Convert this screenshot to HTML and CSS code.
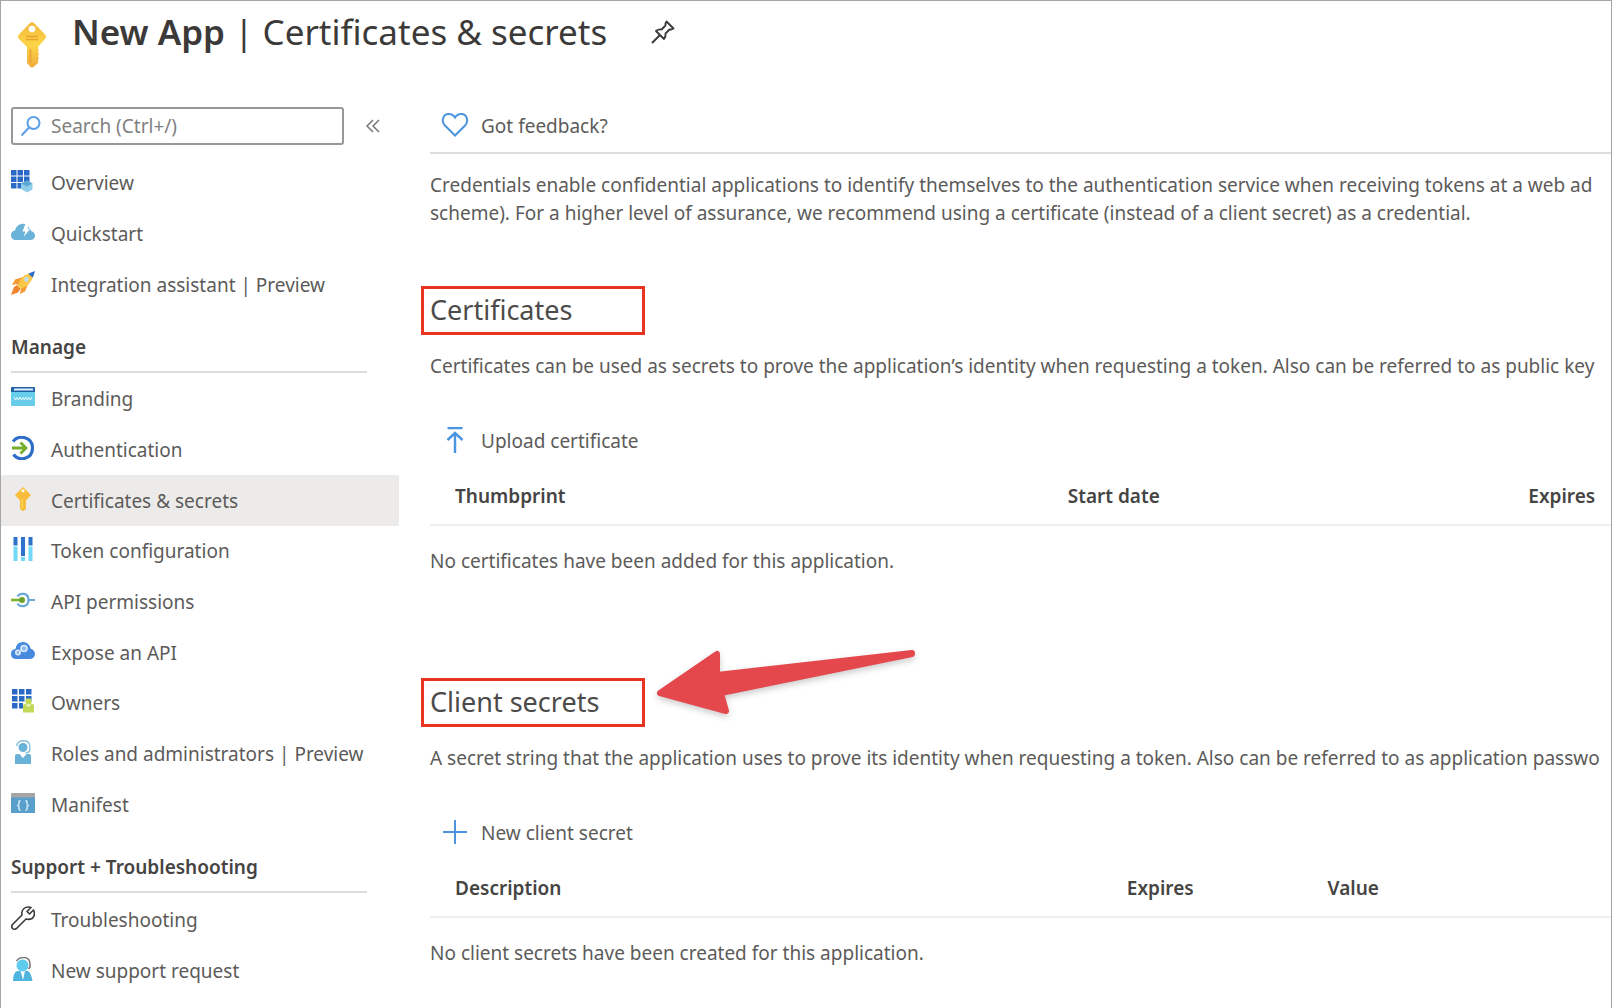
FILE: index.html
```html
<!DOCTYPE html>
<html lang="en">
<head>
    <meta charset="utf-8">
    <title>New App | Certificates &amp; secrets</title>
    <link rel="stylesheet" href="styles.css">
</head>
<body>
    <header class="header">
        <svg class="header-key" viewBox="0 0 28 46">
            <defs>
                <linearGradient id="keyFill" x1="0" y1="0" x2="0" y2="1">
                    <stop offset="0" stop-color="#f5b73c"/>
                    <stop offset="0.5" stop-color="#fcd546"/>
                    <stop offset="1" stop-color="#f0ac3c"/>
                </linearGradient>
            </defs>
            <path fill="url(#keyFill)" d="M12 1Q14-.5 16 1L27 12.500Q29 15 27 17L20 25V27L21 28L20 30L21 32L20 34L21 36L20 38V41L15 45.500H13L9 41V25L1 17Q-1 15 1 12.500Z"/>
            <circle cx="14" cy="7" r="3.300" fill="#fff"/>
            <path d="M8 14.500H20M8 17.500H20" stroke="#e5a32f" stroke-width="1.500"/>
            <path d="M12.500 27V41" stroke="#e9a035" stroke-width="1.500"/>
        </svg>
        <h1><strong>New App</strong> | Certificates &amp; secrets</h1>
        <button class="icon-button" aria-label="Pin">
            <svg width="24" height="24" viewBox="0 0 24 24" fill="none" stroke="#3b3a39" stroke-width="1.900" stroke-linejoin="round">
                <path d="M15.500 1.500L22.500 8.500L20.500 9.500L18.500 9.500L14.500 13.500Q15 16.500 13 19L5 11Q7.500 9 10.500 9.500L14.500 5.500L14.500 3.500Z"/>
                <path d="M9 15L1 23"/>
            </svg>
        </button>
    </header>

    <div class="layout">
        <aside class="sidebar">
            <div class="search-row">
                <div class="search">
                    <svg width="20" height="20" viewBox="0 0 20 20" fill="none" stroke="#5a9fe8" stroke-width="2">
                        <circle cx="12.500" cy="7" r="6"/>
                        <path d="M8 11.500L.5 19.500"/>
                    </svg>
                    <input type="text" placeholder="Search (Ctrl+/)" aria-label="Search">
                </div>
                <button class="icon-button" aria-label="Collapse menu">
                    <svg width="14" height="14" viewBox="0 0 14 14" fill="none" stroke="#767676" stroke-width="1.500">
                        <path d="M7 1L1 7L7 13M13 1L7 7L13 13"/>
                    </svg>
                </button>
            </div>

            <nav>
                <ul class="menu">
                    <li><a href="#">
                        <svg viewBox="0 0 24 24">
                            <g fill="#2a6ac6">
                                <path d="M0 1h5.500v5.500H0zM6.500 1H12v5.500H6.500zM13 1h5.500v5.500H13zM0 7.500h5.500V13H0zM6.500 7.500H12V13H6.500zM13 7.500h5.500V13H13zM0 14h5.500v5.500H0zM6.500 14H12v5.500H6.500z"/>
                            </g>
                            <path fill="#8fcde9" d="M10 14.500L16 11.500L21.500 14.500V20.500L16 23.500L10 20Z"/>
                            <path fill="#5daad4" d="M10 14.500L16 11.500L21.500 14.500L16 17.500Z"/>
                        </svg>
                        Overview
                    </a></li>
                    <li><a href="#">
                        <svg viewBox="0 0 24 24">
                            <path fill="#69b2d8" d="M5 20Q0 20 0 15Q0 11 4 10.500Q5 5 10.500 4Q15 3 17.500 7Q20 9 20 11Q24 12 24 16Q23.500 20 19 20Z"/>
                            <path fill="#fff" d="M14.500 3.500L19 3L16.500 8.500H19.500L12.500 17L14.500 11.500H11.500Z"/>
                        </svg>
                        Quickstart
                    </a></li>
                    <li><a href="#">
                        <svg viewBox="0 0 24 24">
                            <path fill="#f39a32" d="M12 6L4 8.500L1 14L6 13L10 18L9 23L14 20.500L17.500 12Z"/>
                            <path fill="#f0832d" d="M6 14L3 16L0 24L7 21.500L9.500 18Z"/>
                            <path fill="#fbc748" d="M7 15Q9 5 18 2.500L22 6Q19 15 9.500 18Z"/>
                            <path fill="#2b6fc5" d="M17.500 2.500L24 0L22 6.500Q19.500 5.500 17.500 2.500Z"/>
                            <circle cx="15.500" cy="8.500" r="2.400" fill="#bfe0ef"/>
                        </svg>
                        Integration assistant | Preview
                    </a></li>
                </ul>

                <h2>Manage</h2>
                <ul class="menu menu-manage">
                    <li><a href="#">
                        <svg viewBox="0 0 24 24">
                            <path fill="#67cdeb" d="M0 6H24V20Q24 21 23 21H1Q0 21 0 20Z"/>
                            <path fill="#1f62a8" d="M1 2H23Q24 2 24 3V7H0V3Q0 2 1 2Z"/>
                            <path stroke="#dff0fa" stroke-width="2" d="M3 4.500H22"/>
                            <path fill="none" stroke="#e8fafd" d="M3 12L4.500 15L6 12.500L7.500 15L9 12L10.500 15L12 12.500L13.500 15L15 12L16.500 15L18 12.500L19.500 15L21 12"/>
                        </svg>
                        Branding
                    </a></li>
                    <li><a href="#">
                        <svg viewBox="0 0 24 24" fill="none">
                            <path stroke="#2b6dc7" stroke-width="3.200" d="M2 5.500C8-2 21.500 1 21.500 12C21.500 23 8 26 2.500 18.500"/>
                            <path stroke="#76ad2d" stroke-width="2.800" d="M1 12H14M9.500 6.500L15 12L9.500 17.500"/>
                        </svg>
                        Authentication
                    </a></li>
                    <li><a href="#" class="active">
                        <svg viewBox="0 0 24 24">
                            <path fill="#f8bd3c" d="M12 0L20 8L15 13.500V22L12.500 24H11.500L9 22V13.500L4 8Z"/>
                            <path fill="#ffd84d" d="M10.500 12H12V22H10.500Z"/>
                            <circle cx="12" cy="3.800" r="1.500" fill="#fff"/>
                        </svg>
                        Certificates &amp; secrets
                    </a></li>
                    <li><a href="#">
                        <svg viewBox="0 0 24 24">
                            <path fill="#2d72cc" d="M2.500 0H6.500V8.500H2.500ZM10 0H14V19H10ZM17.500 0H21.500V8.500H17.500Z"/>
                            <path fill="#70d9f8" d="M2.500 9.500H6.500V24H2.500ZM10 20H14V24H10ZM17.500 9.500H21.500V24H17.500Z"/>
                        </svg>
                        Token configuration
                    </a></li>
                    <li><a href="#">
                        <svg viewBox="0 0 24 24" fill="none">
                            <path stroke="#6aa9d7" stroke-width="2.200" d="M18 12H24M6.500 8.500C9 4.500 17.500 4.500 17.500 12C17.500 19.500 9 19.500 6.500 15.500"/>
                            <path stroke="#7eb335" stroke-width="2.600" d="M0 12H10"/>
                            <circle cx="11" cy="12" r="3" fill="#6da02c"/>
                        </svg>
                        API permissions
                    </a></li>
                    <li><a href="#">
                        <svg viewBox="0 0 24 24">
                            <path fill="#4689df" d="M5.500 20Q0 20 0 15Q0 10.500 4.500 10Q5.500 3 12 3Q18 3 19.500 9.500Q24 11 24 15Q23.500 20 18.500 20Z"/>
                            <g fill="#8db8ee" stroke="#dceafb" stroke-width="1.600">
                                <circle cx="13" cy="9.500" r="3"/>
                                <circle cx="7" cy="13.500" r="2.200"/>
                            </g>
                        </svg>
                        Expose an API
                    </a></li>
                    <li><a href="#">
                        <svg viewBox="0 0 24 24">
                            <path fill="#2a6ac6" d="M1 0h5.500v5.500H1zM8 0h5.500v5.500H8zM15 0h5.500v5.500H15zM1 7h5.500v5.500H1zM8 7h5.500v5.500H8zM15 7h5.500v5.500H15zM1 14h5.500v5.500H1zM8 14h4v5.500H8z"/>
                            <path fill="#c3da59" d="M12 17Q12 15 14 15H21.500Q23 15 23 17V23.500H12Z"/>
                            <path fill="#fff" d="M15 15L17.500 18L20 15Z"/>
                            <circle cx="17.500" cy="12.500" r="3.200" fill="#c3da59"/>
                        </svg>
                        Owners
                    </a></li>
                    <li><a href="#">
                        <svg viewBox="0 0 24 24">
                            <path fill="#69b2d8" d="M4 16Q4 14 6 14H18Q20 14 20 16V24H4Z"/>
                            <path fill="#fff" d="M7.500 13L12 18L16.500 13Z"/>
                            <circle cx="12" cy="7.500" r="4.500" fill="#69b2d8"/>
                            <path fill="none" stroke="#8cc4e0" stroke-width="1.500" d="M5.500 6C7-1 18-1 18.800 6V10Q18 13 14.500 13"/>
                        </svg>
                        Roles and administrators | Preview
                    </a></li>
                    <li><a href="#">
                        <svg viewBox="0 0 24 24">
                            <path fill="#5a9ecb" d="M0 6H24V22H0Z"/>
                            <path fill="#a5a5a5" d="M1 2H23Q24 2 24 3V6.500H0V3Q0 2 1 2Z"/>
                            <path fill="none" stroke="#d5edf8" stroke-width="1.400" d="M9.500 9.500Q7.500 10 8 12.500Q8 14 7 14.500Q8 15 8 16.500Q7.500 19 9.500 19.500M14.500 9.500Q16.500 10 16 12.500Q16 14 17 14.500Q16 15 16 16.500Q16.500 19 14.500 19.500"/>
                        </svg>
                        Manifest
                    </a></li>
                </ul>

                <h2>Support + Troubleshooting</h2>
                <ul class="menu">
                    <li><a href="#">
                        <svg viewBox="0 0 24 24" fill="none" stroke="#3b3a39" stroke-width="1.600" stroke-linejoin="round">
                            <path d="M20 1.500L16 5.500L18.500 8L22.500 4Q25 9.500 21 12.500Q18 14 15 13L5.500 22.500Q3 24 1.500 22.500Q0 20.500 1.500 18.500L11 9Q10 5 13 2.500Q16 0 20 1.500Z"/>
                        </svg>
                        Troubleshooting
                    </a></li>
                    <li><a href="#">
                        <svg viewBox="0 0 24 24">
                            <path fill="#4fb5df" d="M2 24Q2 15.500 6 14H17Q20 15.500 21.500 24Z"/>
                            <path fill="#fff" d="M9.500 14L12 23L14 14Z"/>
                            <circle cx="11.500" cy="8.500" r="6" fill="#5fcbee"/>
                            <path fill="none" stroke="#777" stroke-width="1.500" d="M5.500 4C9-1 19-1 19 7V10L17.500 12"/>
                        </svg>
                        New support request
                    </a></li>
                </ul>
            </nav>
        </aside>

        <main class="content">
            <div class="toolbar">
                <button class="command">
                    <svg viewBox="0 0 28 28" fill="none" stroke="#4a94e0" stroke-width="2">
                        <path d="M14 23.500L3.500 13C0 8.500 2.500 2 7.500 2C10.500 2 12.500 3 14 5.500C15.500 3 17.500 2 20.500 2C25.500 2 28 8.500 24.500 13Z"/>
                    </svg>
                    Got feedback?
                </button>
            </div>
            <p>Credentials enable confidential applications to identify themselves to the authentication service when receiving tokens at a web ad<br>scheme). For a higher level of assurance, we recommend using a certificate (instead of a client secret) as a credential.</p>

            <section class="credentials">
                <h2>Certificates</h2>
                <p>Certificates can be used as secrets to prove the application’s identity when requesting a token. Also can be referred to as public key</p>
                <button class="command">
                    <svg viewBox="0 0 28 28" fill="none" stroke="#4a94e0" stroke-width="2.400">
                        <path d="M6.500 1H21.500M14 26V6.500M6.500 13L14 6L21.500 13"/>
                    </svg>
                    Upload certificate
                </button>
                <table class="certificates-table">
                    <thead>
                        <tr><th>Thumbprint</th><th>Start date</th><th>Expires</th></tr>
                    </thead>
                    <tbody>
                        <tr><td colspan="3">No certificates have been added for this application.</td></tr>
                    </tbody>
                </table>
            </section>

            <section class="credentials">
                <h2>Client secrets</h2>
                <svg class="arrow" width="270" height="80" viewBox="0 0 270 80">
                    <path fill="#e5484c" stroke="#e5484c" stroke-width="6" stroke-linejoin="round" d="M13 46L70 7V28L265 6V7L74 46L79 64Z"/>
                </svg>
                <p>A secret string that the application uses to prove its identity when requesting a token. Also can be referred to as application passwo</p>
                <button class="command">
                    <svg viewBox="0 0 28 28" fill="none" stroke="#4a94e0" stroke-width="2">
                        <path d="M14 1V25M2 13H26"/>
                    </svg>
                    New client secret
                </button>
                <table class="secrets-table">
                    <thead>
                        <tr><th>Description</th><th>Expires</th><th>Value</th></tr>
                    </thead>
                    <tbody>
                        <tr><td colspan="3">No client secrets have been created for this application.</td></tr>
                    </tbody>
                </table>
            </section>
        </main>
    </div>
</body>
</html>
```
FILE: styles.css
```css
* {
    box-sizing: border-box;
}
body {
    margin: 0;
    min-height: 100vh;
    border: 1px solid #a6a6a6;
    border-bottom-color: #eee;
    background-color: #fff;
    color: #5c5b5a;
    font-family: "Noto Sans", "Open Sans", sans-serif;
    font-size: 19px;
    line-height: 28px;
    overflow: hidden;
}
h1, h2, p, ul {
    margin: 0;
    padding: 0;
    font-weight: normal;
}
button, input {
    font: inherit;
    color: inherit;
    border: none;
    background: none;
    padding: 0;
}
button {
    cursor: pointer;
}
svg {
    display: block;
    flex-shrink: 0;
}
.header {
    display: flex;
    padding: 7px 17px 0;
    height: 106px;
}
.header-key {
    width: 28px;
    height: 46px;
    margin: 14px 26px 0 0;
}
.header h1 {
    font-size: 35px;
    line-height: 48px;
    color: #3b3a39;
    white-space: nowrap;
}
.header strong {
    font-weight: 600;
}
.header .icon-button {
    height: 48px;
    margin-left: 44px;
}
.layout {
    display: grid;
    grid-template-columns: 398px minmax(0, 1fr);
}
.search-row {
    display: flex;
    align-items: center;
    gap: 22px;
    padding-left: 10px;
    margin-bottom: 12px;
}
.search {
    display: flex;
    align-items: center;
    gap: 10px;
    width: 333px;
    height: 38px;
    padding: 0 8px;
    border: 2px solid #999897;
    border-radius: 3px;
}
.search input {
    flex: 1;
    min-width: 0;
    outline: none;
}
.search input::placeholder {
    color: #80807f;
    opacity: 1;
}
.sidebar h2 {
    margin: 23px 32px 1px 10px;
    padding-bottom: 10px;
    border-bottom: 2px solid #dedddc;
    color: #454443;
    font-size: 19px;
    font-weight: 600;
}
.menu {
    display: grid;
    grid-auto-rows: minmax(50px, 1fr);
    min-height: 102px;
    list-style: none;
}
.menu:first-child {
    min-height: 153px;
}
.menu-manage {
    min-height: 456px;
}
.menu a {
    display: flex;
    align-items: center;
    gap: 16px;
    height: 100%;
    padding-left: 10px;
    color: inherit;
    text-decoration: none;
    white-space: nowrap;
}
.menu a.active {
    background-color: #ecebe9;
}
.menu svg {
    width: 24px;
    height: 24px;
    margin-bottom: 4px;
}
.content {
    padding-left: 31px;
    white-space: nowrap;
    overflow: hidden;
}
.toolbar {
    padding: 5px 0 12px;
    margin-bottom: 17px;
    border-bottom: 2px solid #dedddc;
}
.command {
    display: flex;
    align-items: center;
    gap: 12px;
    margin-left: 11px;
}
.command svg {
    width: 28px;
    height: 28px;
}
.credentials {
    position: relative;
    margin-left: -9px;
    padding: 59px 0 44px 9px;
}
.credentials h2 {
    width: 224px;
    margin-left: -9px;
    padding: 3px 6px 5px;
    border: 3px solid #ea3323;
    color: #4c4b4a;
    font-size: 27px;
    line-height: 35px;
}
.credentials p {
    margin: 17px 0 47px;
}
.credentials table {
    width: 100%;
    margin-top: 27px;
    border-collapse: collapse;
    table-layout: fixed;
}
.credentials th {
    padding: 0 0 14px;
    border-bottom: 2px solid #efeeed;
    color: #454443;
    font-weight: 600;
    text-align: left;
}
.credentials th:first-child {
    padding-left: 25px;
}
.credentials td {
    padding: 21px 0 0;
}
.certificates-table th:first-child {
    width: 54%;
}
.certificates-table th:nth-child(2) {
    width: 39%;
}
.secrets-table th:first-child {
    width: 59%;
}
.secrets-table th:nth-child(2) {
    width: 17%;
}
.arrow {
    position: absolute;
    left: 226px;
    top: 28px;
    filter: drop-shadow(0 3px 3px rgba(0, 0, 0, 0.2));
}
```
